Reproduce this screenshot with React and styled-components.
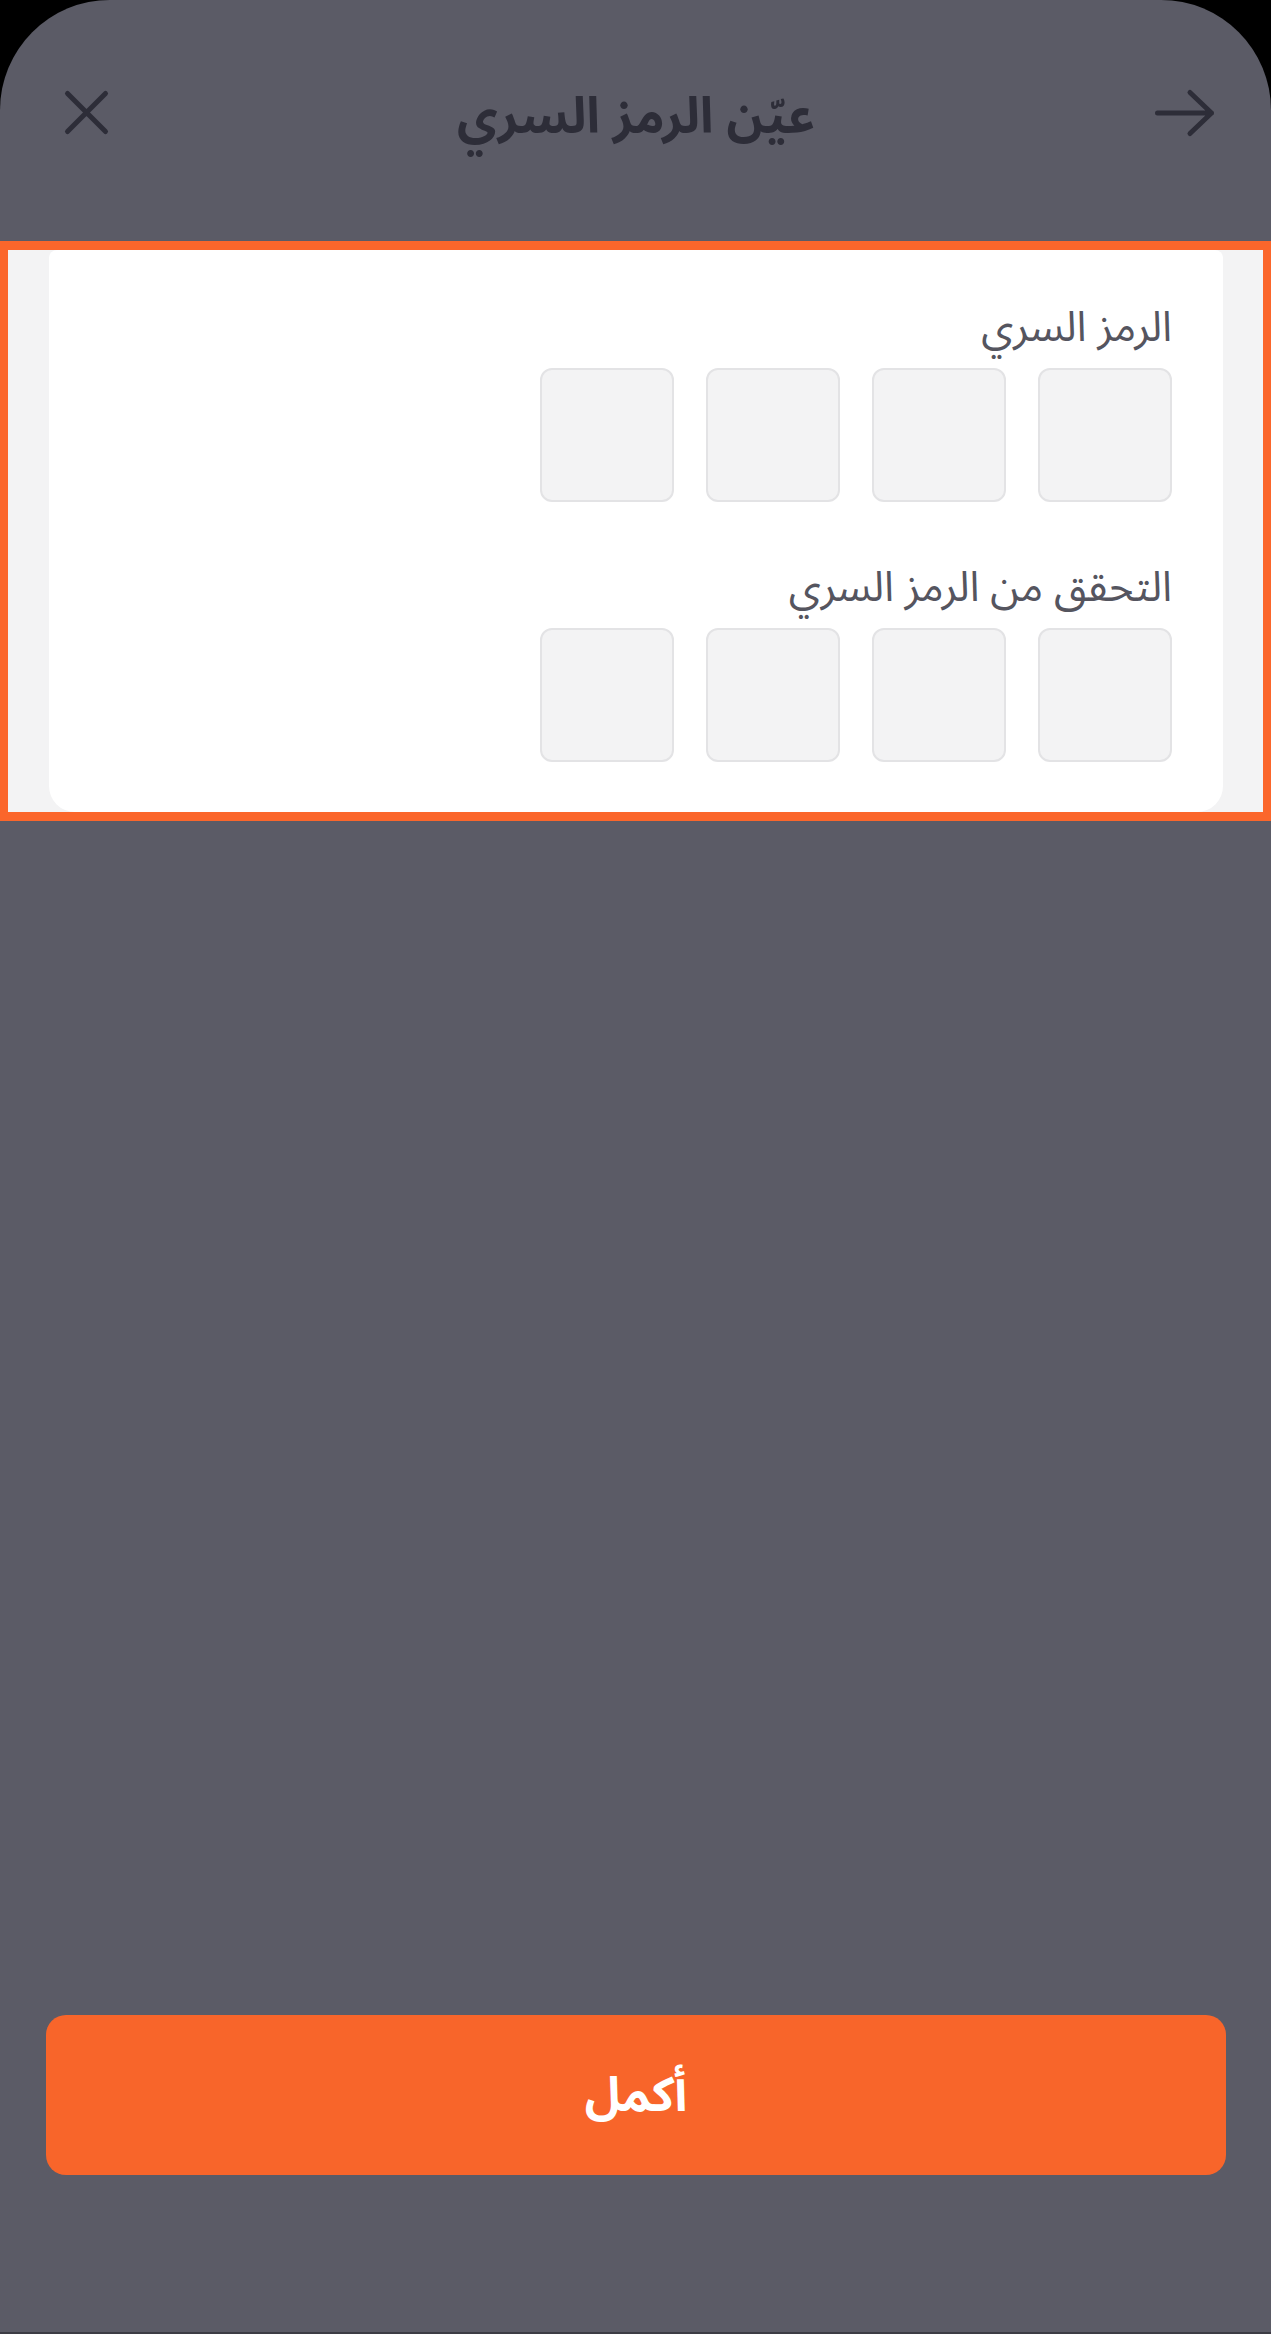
import React from 'react';
import styled, { createGlobalStyle } from 'styled-components';

const GlobalStyle = createGlobalStyle`
  html, body {
    margin: 0;
    padding: 0;
    background: #000;
  }
  * {
    box-sizing: border-box;
  }
`;

const arabicFont = `"Noto Sans Arabic", "Noto Naskh Arabic", "DejaVu Sans", "Noto Sans", sans-serif`;

const Screen = styled.div`
  width: 1271px;
  height: 2334px;
  display: flex;
  flex-direction: column;
  background: #5b5b66;
  border-radius: 110px 110px 0 0;
  border-bottom: 2px solid #3c3c44;
  overflow: hidden;
  font-family: ${arabicFont};
`;

const Header = styled.header`
  height: 241px;
  display: grid;
  grid-template-columns: 1fr auto 1fr;
  align-items: center;
  padding: 0 54px 15px 55px;
  flex-shrink: 0;
`;

const IconButton = styled.button`
  width: 64px;
  height: 64px;
  padding: 0;
  border: 0;
  background: transparent;
  color: #2d2d38;
  display: flex;
  align-items: center;
  justify-content: center;
  justify-self: ${(p) => (p.$end ? 'end' : 'start')};
  cursor: pointer;
`;

const Title = styled.h1`
  margin: 0;
  padding-top: 8px;
  font-size: 50px;
  line-height: 64px;
  font-weight: 700;
  color: #2d2d38;
  direction: rtl;
  text-align: center;
`;

const Highlight = styled.section`
  border: 8px solid #fb662b;
  border-top-width: 9px;
  border-bottom-width: 9px;
  background: #f3f3f4;
  padding: 0 40px 0 41px;
  flex-shrink: 0;
`;

const Card = styled.div`
  background: #fff;
  border-radius: 8px 8px 26px 26px;
  padding: 50px 51px 50px;
  direction: rtl;
`;

const Field = styled.div`
  & + & {
    margin-top: 58px;
  }
`;

const Label = styled.label`
  display: block;
  font-size: 42px;
  line-height: 56px;
  color: #55555f;
  margin-bottom: 12px;
`;

const PinRow = styled.div`
  display: flex;
  gap: 32px;
`;

const PinBox = styled.input`
  width: 134px;
  height: 134px;
  border: 2px solid #e3e3e5;
  border-radius: 12px;
  background: #f3f3f4;
  font-family: ${arabicFont};
  font-size: 48px;
  text-align: center;
  outline: none;
`;

const Spacer = styled.div`
  flex: 1;
`;

const Footer = styled.footer`
  padding: 0 45px 157px 46px;
`;

const PrimaryButton = styled.button`
  width: 100%;
  height: 160px;
  border: 0;
  border-radius: 20px;
  background: #f8652a;
  color: #fff;
  font-family: ${arabicFont};
  font-size: 48px;
  font-weight: 700;
  direction: rtl;
  cursor: pointer;
`;

function CloseIcon() {
  return (
    <svg width="64" height="64" viewBox="0 0 64 64" fill="none" stroke="currentColor" strokeWidth="5" strokeLinecap="round">
      <path d="M12.5 12.5 L50.5 50.5 M50.5 12.5 L12.5 50.5" />
    </svg>
  );
}

function ArrowIcon() {
  return (
    <svg width="64" height="64" viewBox="0 0 64 64" fill="none" stroke="currentColor" strokeWidth="5" strokeLinecap="round" strokeLinejoin="round">
      <path d="M4.5 32 H58.5 M37 11.5 L58.5 32 L37 52.5" />
    </svg>
  );
}

function PinField({ label }) {
  return (
    <Field>
      <Label>{label}</Label>
      <PinRow>
        {[0, 1, 2, 3].map((i) => (
          <PinBox key={i} type="password" maxLength={1} inputMode="numeric" />
        ))}
      </PinRow>
    </Field>
  );
}

export default function App() {
  return (
    <>
      <GlobalStyle />
      <Screen>
        <Header>
          <IconButton aria-label="إغلاق">
            <CloseIcon />
          </IconButton>
          <Title>عيّن الرمز السري</Title>
          <IconButton $end aria-label="رجوع">
            <ArrowIcon />
          </IconButton>
        </Header>
        <Highlight>
          <Card>
            <PinField label="الرمز السري" />
            <PinField label="التحقق من الرمز السري" />
          </Card>
        </Highlight>
        <Spacer />
        <Footer>
          <PrimaryButton>أكمل</PrimaryButton>
        </Footer>
      </Screen>
    </>
  );
}
